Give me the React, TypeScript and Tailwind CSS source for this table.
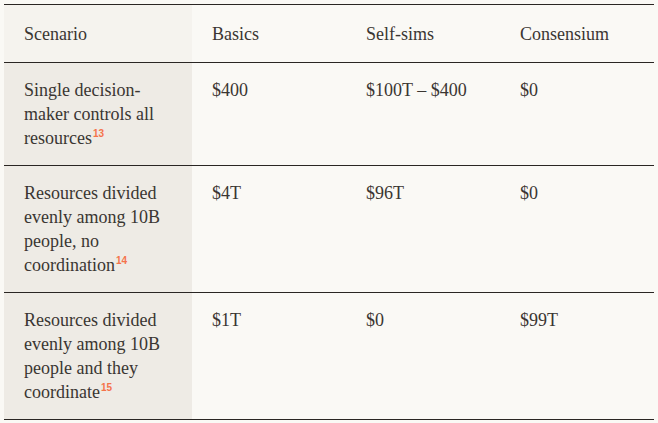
const rows = [
  {
    scenario: "Single decision-maker controls all resources",
    note: "13",
    basics: "$400",
    selfSims: "$100T – $400",
    consensium: "$0",
    h: "h-[103px]",
  },
  {
    scenario: "Resources divided evenly among 10B people, no coordination",
    note: "14",
    basics: "$4T",
    selfSims: "$96T",
    consensium: "$0",
    h: "h-[127px]",
  },
  {
    scenario: "Resources divided evenly among 10B people and they coordinate",
    note: "15",
    basics: "$1T",
    selfSims: "$0",
    consensium: "$99T",
    h: "h-[127px]",
  },
];

export default function App() {
  return (
    <div className="min-h-[423px] w-[658px] bg-[#faf9f5] p-1 text-[18px] leading-6 text-[#3a3632] [font-family:Liberation_Serif,DejaVu_Serif,serif]">
      <div className="w-[650px] border-t-[1.5px] border-[#2a2623]">
        <div className="grid h-[58px] grid-cols-[188px_154px_154px_154px] border-b-[1.5px] border-[#2a2623]">
          <div className="bg-[#f5f3ee] px-5 pt-[17px]">Scenario</div>
          <div className="px-5 pt-[17px]">Basics</div>
          <div className="px-5 pt-[17px]">Self-sims</div>
          <div className="px-5 pt-[17px]">Consensium</div>
        </div>
        {rows.map((r) => (
          <div
            key={r.note}
            className={`grid grid-cols-[188px_154px_154px_154px] border-b-[1.5px] border-[#2a2623] ${r.h}`}
          >
            <div className="bg-[#eeebe5] px-5 pt-[15px]">
              {r.scenario}
              <sup className="relative -top-[7px] ml-px text-[10px] font-bold text-[#f5734b] [font-family:Liberation_Sans,Arial,sans-serif]">
                {r.note}
              </sup>
            </div>
            <div className="px-5 pt-[15px]">{r.basics}</div>
            <div className="px-5 pt-[15px]">{r.selfSims}</div>
            <div className="px-5 pt-[15px]">{r.consensium}</div>
          </div>
        ))}
      </div>
    </div>
  );
}
